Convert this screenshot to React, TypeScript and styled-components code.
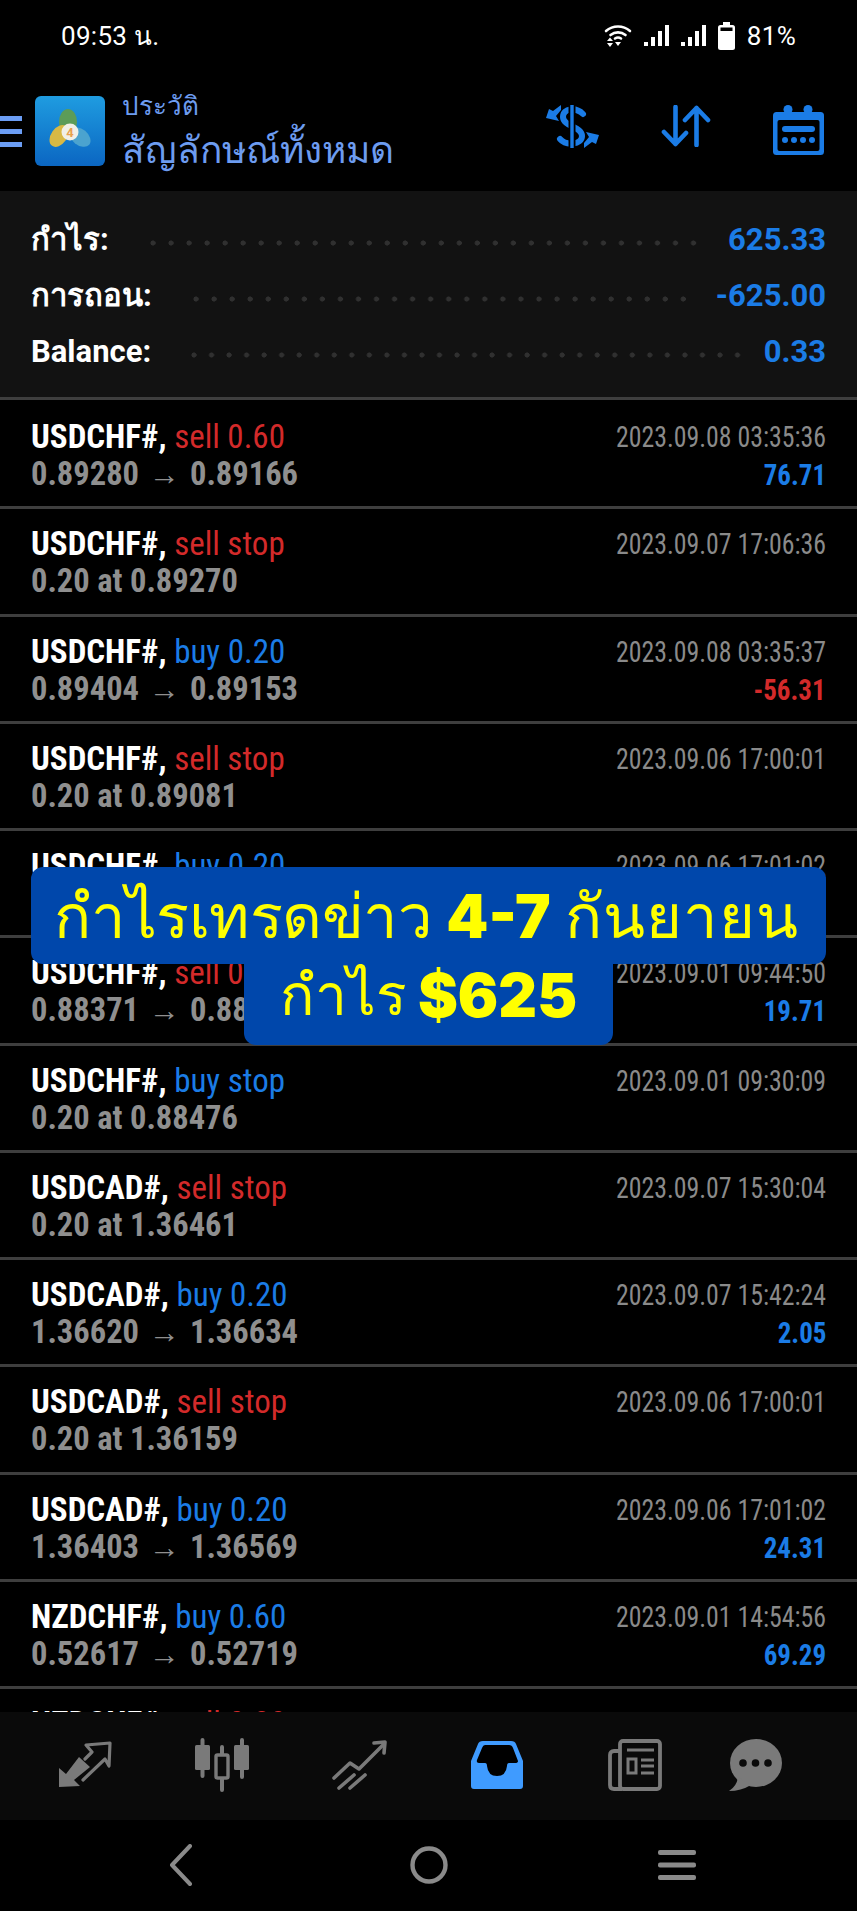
import React from "react";
import styled, { createGlobalStyle } from "styled-components";

const Global = createGlobalStyle`
  html, body { margin: 0; padding: 0; background: #000; }
  * { box-sizing: border-box; }
`;

const Screen = styled.div`
  position: relative;
  width: 857px;
  height: 1911px;
  display: flex;
  flex-direction: column;
  overflow: hidden;
  background: #000;
  font-family: Roboto, "Noto Sans", sans-serif;
  color: #fff;
`;

const StatusBar = styled.div`
  height: 68px;
  flex: none;
  display: flex;
  align-items: center;
  justify-content: space-between;
  padding: 3px 61px 0 61px;
  font-size: 26px;
  letter-spacing: 0.3px;
`;

const StatusIcons = styled.div`
  display: flex;
  align-items: center;
  gap: 12px;
`;

const Toolbar = styled.div`
  height: 123px;
  flex: none;
  display: flex;
  align-items: flex-start;
  padding-top: 28px;
`;

const Burger = styled.div`
  width: 22px;
  margin: 20px 13px 0 0;
  display: flex;
  flex-direction: column;
  gap: 8px;
  span {
    display: block;
    height: 5px;
    background: #6b9df4;
  }
`;

const TitleBlock = styled.div`
  margin-left: 17px;
  display: flex;
  flex-direction: column;
  color: #6d9cf0;
`;

const SmallTitle = styled.div`
  font-size: 26px;
  line-height: 36px;
  margin-top: -8px;
`;

const BigTitle = styled.div`
  font-size: 37px;
  line-height: 50px;
  margin-top: 2px;
`;

const ToolIcons = styled.div`
  margin-left: auto;
  padding: 9px 3px 0 0;
  display: flex;
  align-items: flex-start;
`;

const ToolIcon = styled.div<{ $shift?: number }>`
  width: 112px;
  display: flex;
  justify-content: center;
  padding-right: ${(p) => p.$shift ?? 0}px;
`;

const Summary = styled.div`
  height: 209px;
  flex: none;
  background: #121212;
  border-bottom: 3px solid #3e3e3e;
  padding: 20px 31px 0;
  display: flex;
  flex-direction: column;
`;

const SummaryRow = styled.div`
  height: 56px;
  display: flex;
  align-items: center;
`;

const SummaryLabel = styled.div`
  font-size: 31px;
  font-weight: 700;
  font-stretch: 90%;
`;

const Leader = styled.div<{ $l: number; $r: number }>`
  flex: 1;
  height: 6px;
  margin: 8px ${(p) => p.$r}px 0 ${(p) => p.$l}px;
  background-image: radial-gradient(circle at 3px 3px, #303030 2.3px, transparent 2.8px);
  background-size: 17.5px 6px;
  background-repeat: space no-repeat;
`;

const SummaryValue = styled.div`
  font-size: 31px;
  font-weight: 700;
  font-stretch: 90%;
  color: #1b7ce6;
`;

const List = styled.div`
  flex: 1;
  min-height: 0;
  overflow: hidden;
  padding-top: 2px;
`;

const TradeRow = styled.div`
  height: 107.25px;
  border-bottom: 3px solid #3e3e3e;
  padding: 16px 31px 0;
  display: flex;
  justify-content: space-between;
`;

const LeftCol = styled.div`
  display: flex;
  flex-direction: column;
  font-stretch: 75%;
`;

const RightCol = styled.div`
  display: flex;
  flex-direction: column;
  align-items: flex-end;
  font-stretch: 75%;
`;

const TopLine = styled.div`
  font-size: 33px;
  line-height: 37px;
  white-space: nowrap;
`;

const Symbol = styled.span`
  font-weight: 700;
`;

const Side = styled.span<{ $c: string }>`
  color: ${(p) => p.$c};
`;

const Sub = styled.div`
  font-size: 32.5px;
  line-height: 38px;
  font-weight: 700;
  color: #8f8f8f;
  white-space: nowrap;
`;

const Arrow = styled.span`
  font-weight: 400;
  font-size: 31px;
  margin: 0 10px;
`;

const Stamp = styled.div`
  font-size: 29px;
  line-height: 37px;
  color: #8a8a8a;
  white-space: nowrap;
  margin-top: 1px;
  transform: scaleX(0.89);
  transform-origin: right center;
`;

const Amount = styled.div<{ $c: string }>`
  font-size: 29px;
  line-height: 38px;
  font-weight: 700;
  color: ${(p) => p.$c};
  transform: scaleX(0.93);
  transform-origin: right center;
`;

const TabBar = styled.div`
  height: 108px;
  flex: none;
  background: #0a0a0a;
  display: flex;
  align-items: center;
  padding-left: 16px;
  padding-bottom: 3px;
`;

const Tab = styled.div`
  width: 137.5px;
  flex: none;
  display: flex;
  justify-content: center;
  &:last-child {
    margin-left: -17px;
  }
`;

const NavBar = styled.div`
  height: 91px;
  flex: none;
  display: flex;
  align-items: center;
  justify-content: center;
`;

const NavSlot = styled.div`
  width: 248px;
  display: flex;
  justify-content: center;
  margin-top: -1px;
`;

const Banner = styled.div`
  position: absolute;
  left: 31px;
  right: 31px;
  top: 867px;
  display: flex;
  flex-direction: column;
  align-items: center;
  color: #ffff00;
  font-family: "Liberation Sans", "Noto Sans", sans-serif;
`;

const BannerTop = styled.div`
  width: 100%;
  height: 97px;
  padding-right: 4px;
  background: #0047ab;
  border-radius: 12px;
  display: flex;
  align-items: center;
  justify-content: center;
  font-size: 61.5px;
  white-space: nowrap;
  gap: 14px;
`;

const BannerBottom = styled.div`
  width: 369px;
  height: 81px;
  padding-bottom: 20px;
  background: #0047ab;
  border-radius: 0 0 12px 12px;
  display: flex;
  align-items: center;
  justify-content: center;
  font-size: 57px;
  white-space: nowrap;
  gap: 11px;
`;

const BannerWord = styled.span<{ $track?: number }>`
  letter-spacing: ${(p) => p.$track ?? 0}px;
`;

const Heavy = styled.span`
  font-family: Inter, "Liberation Sans", sans-serif;
  font-weight: 900;
  font-size: 60px;
`;

const BLUE = "#1b7ce6";
const RED = "#d32a2a";
const GREY = "#7a7a7a";

type Trade = {
  sym: string;
  side: string;
  sideColor: string;
  sub: string | [string, string];
  stamp: string;
  amount?: string;
  amountColor?: string;
};

const trades: Trade[] = [
  { sym: "USDCHF#,", side: "sell 0.60", sideColor: RED, sub: ["0.89280", "0.89166"], stamp: "2023.09.08 03:35:36", amount: "76.71", amountColor: BLUE },
  { sym: "USDCHF#,", side: "sell stop", sideColor: RED, sub: "0.20 at 0.89270", stamp: "2023.09.07 17:06:36" },
  { sym: "USDCHF#,", side: "buy 0.20", sideColor: BLUE, sub: ["0.89404", "0.89153"], stamp: "2023.09.08 03:35:37", amount: "-56.31", amountColor: RED },
  { sym: "USDCHF#,", side: "sell stop", sideColor: RED, sub: "0.20 at 0.89081", stamp: "2023.09.06 17:00:01" },
  { sym: "USDCHF#,", side: "buy 0.20", sideColor: BLUE, sub: "", stamp: "2023.09.06 17:01:02" },
  { sym: "USDCHF#,", side: "sell 0", sideColor: RED, sub: ["0.88371", "0.88"], stamp: "2023.09.01 09:44:50", amount: "19.71", amountColor: BLUE },
  { sym: "USDCHF#,", side: "buy stop", sideColor: BLUE, sub: "0.20 at 0.88476", stamp: "2023.09.01 09:30:09" },
  { sym: "USDCAD#,", side: "sell stop", sideColor: RED, sub: "0.20 at 1.36461", stamp: "2023.09.07 15:30:04" },
  { sym: "USDCAD#,", side: "buy 0.20", sideColor: BLUE, sub: ["1.36620", "1.36634"], stamp: "2023.09.07 15:42:24", amount: "2.05", amountColor: BLUE },
  { sym: "USDCAD#,", side: "sell stop", sideColor: RED, sub: "0.20 at 1.36159", stamp: "2023.09.06 17:00:01" },
  { sym: "USDCAD#,", side: "buy 0.20", sideColor: BLUE, sub: ["1.36403", "1.36569"], stamp: "2023.09.06 17:01:02", amount: "24.31", amountColor: BLUE },
  { sym: "NZDCHF#,", side: "buy 0.60", sideColor: BLUE, sub: ["0.52617", "0.52719"], stamp: "2023.09.01 14:54:56", amount: "69.29", amountColor: BLUE },
  { sym: "NZDCHF#,", side: "sell 0.20", sideColor: RED, sub: "", stamp: "" },
];

const Wifi = () => (
  <svg width="28" height="24" viewBox="0 0 28 24">
    <g fill="none" stroke="#fff" strokeWidth="2.6" strokeLinecap="round">
      <path d="M2 7 C9 1 19 1 26 7" />
      <path d="M6.5 11 C11 7.5 17 7.5 21.5 11" />
      <path d="M11 14.5 C13 13.2 15 13.2 17 14.5" />
    </g>
    <path d="M3 17 L6 13.5 L9 17 Z M3 19 H9 L6 23 Z M11 18 H17 L14 22 Z" fill="#fff" />
  </svg>
);

const Signal = () => (
  <svg width="25" height="22" viewBox="0 0 25 22" fill="#fff">
    <rect x="0" y="17" width="4" height="4" />
    <rect x="7" y="12" width="4" height="9" />
    <rect x="14" y="6" width="4" height="15" />
    <rect x="21" y="0" width="4" height="21" />
  </svg>
);

const Battery = () => (
  <svg width="17" height="28" viewBox="0 0 17 28">
    <rect x="5" y="0" width="7" height="4" fill="#fff" />
    <rect x="0" y="3" width="17" height="25" rx="2.5" fill="#fff" />
    <rect x="2.5" y="5.5" width="12" height="3.5" fill="#000" />
  </svg>
);

const DollarSwap = () => (
  <svg width="53" height="43" viewBox="0 0 53 43">
    <path d="M37 9 C30 2 17 3 17 12 C17 22 36 21 36 31 C36 40 20 41 14 34" fill="none" stroke="#1b7ce6" strokeWidth="6" strokeLinecap="round" />
    <path d="M26 0 V43" stroke="#000" strokeWidth="7" />
    <path d="M26 0 V43" stroke="#1b7ce6" strokeWidth="3.4" strokeLinecap="round" />
    <path d="M0 13 L13 16 L10 11 L15 5 V0 L7 6 L3 4 Z" fill="#1b7ce6" />
    <path d="M53 30 L40 27 L43 32 L38 38 V43 L46 37 L50 39 Z" fill="#1b7ce6" />
  </svg>
);

const UpDown = () => (
  <svg width="50" height="42" viewBox="0 0 50 42" fill="none" stroke="#1b7ce6" strokeWidth="4.6" strokeLinecap="round" strokeLinejoin="round">
    <path d="M14.5 2 V39 M3 27 L14.5 39 L25 28" />
    <path d="M35.5 40 V3 M24 15 L35.5 3 L47 15" />
  </svg>
);

const Calendar = () => (
  <svg width="51" height="50" viewBox="0 0 51 50">
    <circle cx="15" cy="4.5" r="4.5" fill="#1b7ce6" />
    <circle cx="35" cy="4.5" r="4.5" fill="#1b7ce6" />
    <rect x="0" y="7" width="51" height="43" rx="3.5" fill="#1b7ce6" />
    <rect x="4.5" y="15" width="42" height="31" rx="2" fill="#000" />
    <rect x="9" y="21" width="33" height="6" rx="3" fill="#1b7ce6" />
    <circle cx="12" cy="35" r="3" fill="#1b7ce6" />
    <circle cx="21" cy="35" r="3" fill="#1b7ce6" />
    <circle cx="30" cy="35" r="3" fill="#1b7ce6" />
    <circle cx="39" cy="35" r="3" fill="#1b7ce6" />
  </svg>
);

const Logo = () => (
  <svg width="70" height="70" viewBox="0 0 70 70">
    <defs>
      <linearGradient id="logoBg" x1="0" y1="0" x2="0" y2="1">
        <stop offset="0" stopColor="#1f9ce0" />
        <stop offset="1" stopColor="#0b66c2" />
      </linearGradient>
    </defs>
    <rect width="70" height="70" rx="6" fill="url(#logoBg)" />
    <ellipse cx="33" cy="26" rx="9" ry="13" fill="#5c9c58" />
    <ellipse cx="24" cy="40" rx="8" ry="12" fill="#d8b944" transform="rotate(35 24 40)" />
    <ellipse cx="45" cy="41" rx="8" ry="12" fill="#4ba3cf" transform="rotate(-50 45 41)" />
    <circle cx="35" cy="36" r="8.5" fill="#f1efe6" />
    <text x="35" y="41" textAnchor="middle" fontFamily="Roboto, sans-serif" fontSize="13" fontWeight="700" fill="#e8a04d">4</text>
  </svg>
);

const TabTrade = () => (
  <svg width="54" height="47" viewBox="0 0 54 47">
    <polygon points="1,46 1,27 8,33 21,16 32,26 16,39 22,45" fill={GREY} />
    <path d="M25 39 L47 18 L51 25 L52 2 L28 4 L34 11 L27 18" fill="none" stroke={GREY} strokeWidth="3.2" strokeLinejoin="round" strokeLinecap="round" />
  </svg>
);

const TabCandles = () => (
  <svg width="57" height="54" viewBox="0 0 57 54">
    <g stroke={GREY} strokeWidth="4" strokeLinecap="round">
      <path d="M8.5 2 V38 M28 9 V52 M48 2 V39" />
    </g>
    <rect x="1" y="7" width="15" height="25" rx="1.5" fill={GREY} />
    <rect x="40" y="7" width="15" height="25" rx="1.5" fill={GREY} />
    <rect x="22" y="17" width="12" height="23" rx="1.5" fill="#0a0a0a" stroke={GREY} strokeWidth="3.4" />
  </svg>
);

const TabChart = () => (
  <svg width="55" height="50" viewBox="0 0 55 50" fill="none" stroke={GREY} strokeWidth="3.6" strokeLinecap="round" strokeLinejoin="round">
    <path d="M2 38 L18 23 L27 29 L51 5" />
    <path d="M42 3 L53 2 L52 13" />
    <path d="M7 48 L22 35 M18 48 L33 35" />
  </svg>
);

const TabInbox = () => (
  <svg width="52" height="48" viewBox="0 0 52 48">
    <path d="M12 0 H40 Q44 0 45 3 L52 20 V45 Q52 48 49 48 H3 Q0 48 0 45 V20 L7 3 Q8 0 12 0 Z" fill="#3f9bff" />
    <path d="M14 4 H38 Q41 4 42 7 L47 20 Q47 22 44 22 H38 Q36 22 36 25 Q35 35 26 35 Q17 35 16 25 Q16 22 14 22 H8 Q5 22 6 19 L11 7 Q12 4 14 4 Z" fill="#000" />
  </svg>
);

const TabNews = () => (
  <svg width="54" height="52" viewBox="0 0 54 52" fill="none" stroke={GREY}>
    <rect x="12" y="2" width="40" height="48" rx="3" strokeWidth="3.8" />
    <path d="M12 12 H6 Q2 12 2 16 V46 Q2 50 6 50 H14" strokeWidth="3.8" />
    <path d="M19 11 H46 M33 21 H46 M33 27 H46 M33 34 H46" strokeWidth="3.2" />
    <rect x="20" y="20" width="8" height="14" strokeWidth="3" />
  </svg>
);

const TabChat = () => (
  <svg width="53" height="52" viewBox="0 0 53 52">
    <ellipse cx="27" cy="24" rx="26" ry="24" fill={GREY} />
    <path d="M9 38 Q8 47 0 52 Q12 52 22 46 Z" fill={GREY} />
    <circle cx="14" cy="24" r="3.8" fill="#0a0a0a" />
    <circle cx="26.500" cy="24" r="3.8" fill="#0a0a0a" />
    <circle cx="39" cy="24" r="3.8" fill="#0a0a0a" />
  </svg>
);

const NavBack = () => (
  <svg width="24" height="42" viewBox="0 0 24 42" fill="none" stroke="#8a8a8a" strokeWidth="4" strokeLinecap="round" strokeLinejoin="round">
    <path d="M21 2 L3 21 L21 40" />
  </svg>
);

const NavHome = () => (
  <svg width="38" height="38" viewBox="0 0 38 38" fill="none" stroke="#8a8a8a" strokeWidth="4.4">
    <circle cx="19" cy="19" r="16.500" />
  </svg>
);

const NavMenu = () => (
  <svg width="38" height="30" viewBox="0 0 38 30" fill="#8a8a8a">
    <rect y="0" width="38" height="5" rx="2" />
    <rect y="12.500" width="38" height="5" rx="2" />
    <rect y="25" width="38" height="5" rx="2" />
  </svg>
);

export default function App() {
  return (
    <Screen>
      <Global />
      <StatusBar>
        <span>09:53 น.</span>
        <StatusIcons>
          <Wifi />
          <Signal />
          <Signal />
          <Battery />
          <span>81%</span>
        </StatusIcons>
      </StatusBar>
      <Toolbar>
        <Burger>
          <span />
          <span />
          <span />
        </Burger>
        <Logo />
        <TitleBlock>
          <SmallTitle>ประวัติ</SmallTitle>
          <BigTitle>สัญลักษณ์ทั้งหมด</BigTitle>
        </TitleBlock>
        <ToolIcons>
          <ToolIcon $shift={4}>
            <DollarSwap />
          </ToolIcon>
          <ToolIcon>
            <UpDown />
          </ToolIcon>
          <ToolIcon>
            <Calendar />
          </ToolIcon>
        </ToolIcons>
      </Toolbar>
      <Summary>
        <SummaryRow>
          <SummaryLabel>กำไร:</SummaryLabel>
          <Leader $l={41} $r={20} />
          <SummaryValue>625.33</SummaryValue>
        </SummaryRow>
        <SummaryRow>
          <SummaryLabel>การถอน:</SummaryLabel>
          <Leader $l={41} $r={18} />
          <SummaryValue>-625.00</SummaryValue>
        </SummaryRow>
        <SummaryRow>
          <SummaryLabel>Balance:</SummaryLabel>
          <Leader $l={40} $r={12} />
          <SummaryValue>0.33</SummaryValue>
        </SummaryRow>
      </Summary>
      <List>
        {trades.map((t, i) => (
          <TradeRow key={i}>
            <LeftCol>
              <TopLine>
                <Symbol>{t.sym}</Symbol> <Side $c={t.sideColor}>{t.side}</Side>
              </TopLine>
              <Sub>
                {Array.isArray(t.sub) ? (
                  <>
                    {t.sub[0]}
                    <Arrow>→</Arrow>
                    {t.sub[1]}
                  </>
                ) : (
                  t.sub
                )}
              </Sub>
            </LeftCol>
            <RightCol>
              <Stamp>{t.stamp}</Stamp>
              {t.amount && <Amount $c={t.amountColor!}>{t.amount}</Amount>}
            </RightCol>
          </TradeRow>
        ))}
      </List>
      <TabBar>
        <Tab><TabTrade /></Tab>
        <Tab><TabCandles /></Tab>
        <Tab><TabChart /></Tab>
        <Tab><TabInbox /></Tab>
        <Tab><TabNews /></Tab>
        <Tab><TabChat /></Tab>
      </TabBar>
      <NavBar>
        <NavSlot><NavBack /></NavSlot>
        <NavSlot><NavHome /></NavSlot>
        <NavSlot><NavMenu /></NavSlot>
      </NavBar>
      <Banner>
        <BannerTop>
          <BannerWord $track={-0.5}>กำไรเทรดข่าว</BannerWord>
          <Heavy>4-7</Heavy>
          <BannerWord $track={1}>กันยายน</BannerWord>
        </BannerTop>
        <BannerBottom>
          <BannerWord>กำไร</BannerWord>
          <Heavy>$625</Heavy>
        </BannerBottom>
      </Banner>
    </Screen>
  );
}
